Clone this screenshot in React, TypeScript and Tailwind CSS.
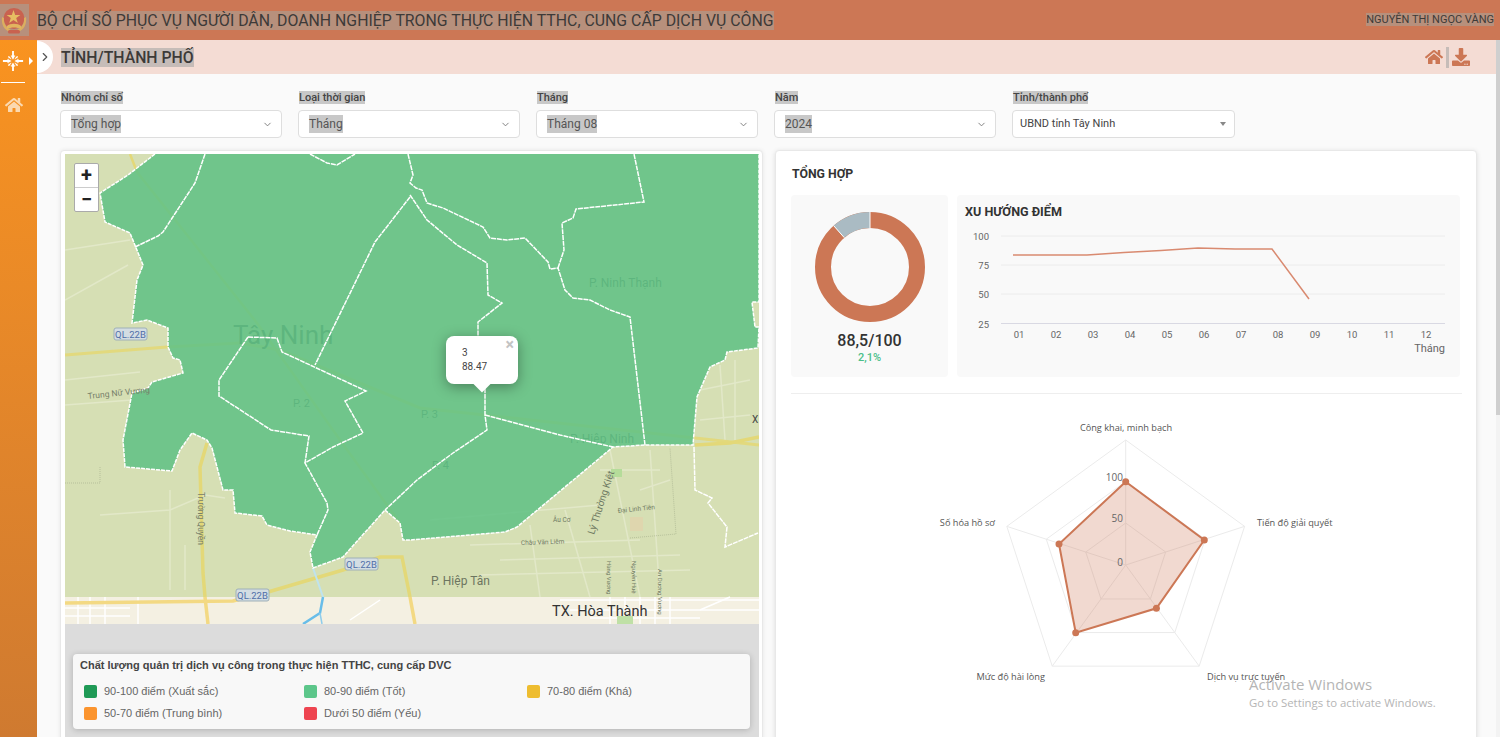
import React from 'react';
import { FaHome, FaDownload } from 'react-icons/fa';
import { ChevronDown, ChevronRight } from 'lucide-react';

const greenArea =
  '155,154 128,175 100,193 105,222 130,233 143,265 137,280 132,323 147,320 168,328 168,347 173,358 180,360 183,373 152,382 148,388 132,393 123,440 125,467 172,471 180,450 192,433 207,440 212,448 223,490 233,490 235,513 262,516 267,525 290,531 317,535 310,552 313,568 343,557 385,510 400,523 403,540 410,540 505,532 517,527 613,447 645,445 693,445 697,397 710,367 725,360 727,352 758,348 759,327 755,327 752,302 759,302 759,154';

const innerLines = [
  '205,154 195,183 163,232 158,236 135,247',
  '410,197 375,242 315,365',
  '248,337 277,338 282,352 366,391 345,401 363,433 333,447 305,463 327,503 328,510 317,535',
  '248,337 219,380 219,396 271,430 309,436 305,463',
  '408,154 413,175 410,183 416,188 422,190 427,203 443,208 483,227 490,238 507,240 525,238 548,262 550,269 558,268 565,290 573,298 590,300 610,310 630,317 645,445',
  '410,195 427,220 457,245 487,263 488,295 502,303 478,322 478,337 485,390 485,415 487,430 453,453 417,480 385,510',
  '485,415 560,435 613,447',
  '558,268 564,250 562,223 573,218 576,209 644,202 634,154',
  '310,154 327,163 337,165 355,154',
  '694,447 695,490 712,498 708,503 727,527 725,547 758,533',
];

const paleStreets = [
  '65,250 130,240',
  '65,300 128,265',
  '65,380 140,372',
  '65,405 132,400',
  '100,515 170,510 205,495 225,498',
  '170,490 170,590',
  '185,545 185,590',
  '430,520 600,505',
  '470,545 640,540',
  '530,525 540,597',
  '565,510 590,597',
  '610,450 640,597',
  '650,450 660,597',
  '640,490 670,480',
  '600,470 660,470',
  '500,560 680,555',
  '480,575 690,570',
  '700,390 750,380',
  '700,420 750,415',
  '720,365 725,440',
  '735,360 735,440',
];

const cityStreets = [
  '65,608 130,608',
  '65,616 130,616',
  '78,597 78,624',
  '90,597 90,624',
  '105,597 105,624',
  '138,597 138,624',
  '560,600 760,600',
  '570,610 760,610',
  '590,618 700,618',
  '610,597 610,624',
  '625,597 625,624',
  '640,597 640,624',
  '655,597 655,624',
  '670,597 670,624',
  '350,620 380,600',
  '700,610 730,597',
];

const RoadBadge: React.FC<{ x: number; y: number }> = ({ x, y }) => (
  <g>
    <rect x={x} y={y} width="33" height="12" rx="2" fill="#d3dde3" stroke="#9fb0b8" />
    <text x={x + 16.5} y={y + 9.5} textAnchor="middle" fontSize="9.5" fill="#4f6ea8">
      QL.22B
    </text>
  </g>
);

const MapDrawing = () => (
  <svg viewBox="65 154 694 470" className="block w-[694px] h-[470px]" style={{ fontFamily: 'Roboto, sans-serif' }}>
    <rect x="65" y="154" width="694" height="470" fill="#d6dfb4" />
    <rect x="65" y="597" width="694" height="27" fill="#f4f0e2" />
    {paleStreets.map((p) => (
      <polyline key={p} points={p} fill="none" stroke="#e2e8c8" strokeWidth="1.5" />
    ))}
    {cityStreets.map((p) => (
      <polyline key={p} points={p} fill="none" stroke="#ffffff" strokeWidth="1.5" />
    ))}
    <rect x="611" y="469" width="11" height="8" fill="#b5dc9a" />
    <rect x="630" y="517" width="13" height="14" fill="#dfd6ae" />
    <rect x="617" y="616" width="16" height="8" fill="#bfe0a6" />
    <polyline points="630,538 676,534 670,448" fill="none" stroke="#a9b38f" strokeWidth="0.7" strokeDasharray="1 1" />
    <polyline points="65,483 100,483 100,467" fill="none" stroke="#a9b38f" strokeWidth="0.7" strokeDasharray="1 1" />

    {/* duong chinh */}
    <g fill="none" stroke="#e3d878" strokeWidth="3.5">
      <polyline points="65,355 167,347 240,343 280,350 420,408 759,445" strokeWidth="3" opacity="0.9" />
      <polyline points="130,154 137,172 257,323 340,440 400,523" strokeWidth="2.5" />
      <polyline points="207,443 200,467 203,573 205,597" />
      <polyline points="268,592 343,570 380,557 402,557 410,597" />
      <polyline points="695,445 730,443 759,437" />
    </g>
    <g fill="none" stroke="#f3d983" strokeWidth="3.5">
      <polyline points="65,603 233,601 268,592" />
      <polyline points="205,597 208,624" />
      <polyline points="410,597 415,624" />
    </g>
    <polyline points="313,568 323,597" fill="none" stroke="#bfe3ee" strokeWidth="2" />
    <polyline points="323,597 320,613 303,624" fill="none" stroke="#68bde9" strokeWidth="2.5" />
    <polyline points="320,613 322,624" fill="none" stroke="#8fcdec" strokeWidth="1.5" />

    <text x="233" y="344" fontSize="26" fill="#3a5a48">Tây Ninh</text>
    <text x="293" y="407" fontSize="11" fill="#3a5a48">P. 2</text>
    <text x="421" y="418" fontSize="11" fill="#3a5a48">P. 3</text>
    <text x="432" y="469" fontSize="11" fill="#3a5a48">P. 4</text>
    <text x="589" y="287" fontSize="12" fill="#3a5a48">P. Ninh Thạnh</text>
    <text x="570" y="443" fontSize="12" fill="#3a5a48">P. Hiệp Ninh</text>

    <polygon points={greenArea} fill="#62c285" opacity="0.88" />
    <polyline points={greenArea} fill="none" stroke="#ffffff" strokeWidth="1.5" strokeDasharray="4 1" />
    {innerLines.map((p) => (
      <polyline key={p} points={p} fill="none" stroke="#ffffff" strokeWidth="1.5" strokeDasharray="5 0.8" />
    ))}

    <RoadBadge x={114} y={328} />
    <RoadBadge x={345} y={558} />
    <RoadBadge x={236} y={589} />
    <text x="88" y="399" fontSize="8.5" fill="#77806a" transform="rotate(-6 88 399)">Trung Nữ Vương</text>
    <text x="198" y="492" fontSize="8.5" fill="#77806a" transform="rotate(90 198 492)">Trường Quyền</text>
    <text x="594" y="535" fontSize="10" fill="#6f7a62" transform="rotate(-72 594 535)">Lý Thường Kiệt</text>
    <text x="618" y="513" fontSize="6.5" fill="#6f7a62" transform="rotate(-6 618 513)">Đại Linh Tiên</text>
    <text x="553" y="522" fontSize="6.5" fill="#6f7a62">Âu Cơ</text>
    <text x="521" y="545" fontSize="6.5" fill="#6f7a62" transform="rotate(-2 521 545)">Châu Văn Liêm</text>
    <text x="607" y="561" fontSize="6" fill="#6f7a62" transform="rotate(90 607 561)">Hùng Vương</text>
    <text x="632" y="561" fontSize="6" fill="#6f7a62" transform="rotate(90 632 561)">Nguyễn Huệ</text>
    <text x="658" y="569" fontSize="6" fill="#6f7a62" transform="rotate(90 658 569)">An Dương Vương</text>
    <text x="431" y="585" fontSize="12" fill="#6d7560">P. Hiệp Tân</text>
    <text x="552" y="616" fontSize="14.5" fill="#333333">TX. Hòa Thành</text>
    <text x="752" y="423" fontSize="10" fill="#444444">X</text>
  </svg>
);

const MapPopup = () => (
  <div className="absolute left-[381px] top-[182px] w-[72px] h-[48px] rounded-lg bg-white shadow-[0_3px_14px_rgba(0,0,0,0.35)] pl-4 pt-[10px] text-[10px] leading-[14px] text-[#444]">
    <div>3</div>
    <div>88.47</div>
    <span className="absolute right-[4px] top-[1px] text-[16px] font-bold leading-[16px] text-[#c3c3c3]">×</span>
    <span className="absolute left-[30px] top-[42px] w-[12px] h-[12px] rotate-45 bg-white" />
  </div>
);

const legendItems = [
  { color: 'bg-[#1f9a56]', label: '90-100 điểm (Xuất sắc)' },
  { color: 'bg-[#5cc68a]', label: '80-90 điểm (Tốt)' },
  { color: 'bg-[#eebd30]', label: '70-80 điểm (Khá)' },
  { color: 'bg-[#fb942e]', label: '50-70 điểm (Trung bình)' },
  { color: 'bg-[#ee4450]', label: 'Dưới 50 điểm (Yếu)' },
];

const Legend = () => (
  <div className="h-[75px] rounded bg-[#f8f8f8] shadow-[0_1px_6px_rgba(0,0,0,0.2)] pl-[7px] pt-[5px]" style={{ fontFamily: '"Liberation Sans", Arial, sans-serif' }}>
    <div className="text-[11px] leading-[13px] font-bold text-[#444]">
      Chất lượng quản trị dịch vụ công trong thực hiện TTHC, cung cấp DVC
    </div>
    <div className="mt-[8px] ml-[4px] grid grid-cols-[220px_223px_200px]">
      {legendItems.map((item) => (
        <div key={item.label} className="flex items-center h-[22px]">
          <span className={`w-[13px] h-[13px] rounded-[2px] ${item.color}`} />
          <span className="ml-[7px] text-[11px] text-[#666]">{item.label}</span>
        </div>
      ))}
    </div>
  </div>
);

const filters = [
  { label: 'Nhóm chỉ số', value: 'Tổng hợp' },
  { label: 'Loại thời gian', value: 'Tháng' },
  { label: 'Tháng', value: 'Tháng 08' },
  { label: 'Năm', value: '2024' },
];

const FilterSelect: React.FC<{ label: string; value: string }> = ({ label, value }) => (
  <div className="w-[222px]">
    <div className="h-[16px] pl-px text-[11px] leading-[16px] font-medium text-[#444]">
      <span className="bg-[#c8c8c8]">{label}</span>
    </div>
    <div className="mt-[4px] h-[28px] flex items-center justify-between pl-[10px] pr-[8px] bg-white border border-[#dedede] rounded text-[12px] text-[#555]">
      <span className="bg-[#c8c8c8]">{value}</span>
      <ChevronDown className="w-[11px] h-[11px] text-[#777]" />
    </div>
  </div>
);

const Donut = () => (
  <svg viewBox="0 0 110 110" className="w-[110px] h-[110px]">
    <circle cx="55" cy="55" r="47" fill="none" stroke="#cc7755" strokeWidth="16" />
    <circle
      cx="55"
      cy="55"
      r="47"
      fill="none"
      stroke="#aabbc3"
      strokeWidth="16"
      strokeDasharray="34 296"
      transform="rotate(-90 55 55) scale(1 -1) translate(0 -110)"
    />
    <line x1="55" y1="0" x2="55" y2="16" stroke="#ffffff" strokeWidth="1" />
    <line x1="18.7" y1="13.7" x2="29.3" y2="25.7" stroke="#ffffff" strokeWidth="1" />
  </svg>
);

const months = ['01', '02', '03', '04', '05', '06', '07', '08', '09', '10', '11', '12'];
const trendPoints = '56,60 93,60 130,60 167,57.5 204,55.5 241,53 278,54 315,54 352,104';

const TrendChart = () => (
  <svg viewBox="0 0 503 150" className="block w-[503px] h-[150px]" style={{ fontFamily: 'Roboto, sans-serif' }}>
    {[
      { y: 41, label: '100' },
      { y: 70, label: '75' },
      { y: 99, label: '50' },
      { y: 128.5, label: '25' },
    ].map((t) => (
      <g key={t.label}>
        <line x1="44" x2="488" y1={t.y} y2={t.y} stroke={t.label === '25' ? '#d9d9e3' : '#ececec'} />
        <text x="32" y={t.y + 4} textAnchor="end" fontSize="9.5" fill="#666">
          {t.label}
        </text>
      </g>
    ))}
    <polyline points={trendPoints} fill="none" stroke="#d98a70" strokeWidth="1.5" />
    {months.map((m, i) => (
      <text key={m} x={62 + i * 37} y="143" textAnchor="middle" fontSize="9.5" fill="#666">
        {m}
      </text>
    ))}
  </svg>
);

const cx = 334.7;
const cy = 165;
const vertex = (r: number, i: number) => {
  const a = ((-90 + i * 72) * Math.PI) / 180;
  return [cx + r * Math.cos(a), cy + r * Math.sin(a)];
};
const ring = (r: number) => [0, 1, 2, 3, 4].map((i) => vertex(r, i).join(',')).join(' ');
const radarData = [
  [334.7, 81.7],
  [413.3, 140],
  [365.4, 208.3],
  [284.7, 232.7],
  [268, 144],
];

const RadarChart = () => (
  <svg viewBox="0 0 686 340" className="block mt-[6px] w-[686px] h-[340px]" style={{ fontFamily: '"Open Sans", sans-serif' }}>
    {[42, 83.5, 125].map((r) => (
      <polygon key={r} points={ring(r)} fill="none" stroke="#ebebeb" />
    ))}
    {[0, 1, 2, 3, 4].map((i) => {
      const [x, y] = vertex(125, i);
      return <line key={i} x1={cx} y1={cy} x2={x} y2={y} stroke="#ebebeb" />;
    })}
    <polygon points={radarData.map((p) => p.join(',')).join(' ')} fill="#cc7755" fillOpacity="0.28" stroke="#cc7755" strokeWidth="2" />
    {radarData.map((p) => (
      <circle key={p[0]} cx={p[0]} cy={p[1]} r="3.5" fill="#cc7755" />
    ))}
    <g fontSize="10" fill="#666" textAnchor="end">
      <text x="332" y="81">100</text>
      <text x="332" y="122">50</text>
      <text x="332" y="166">0</text>
    </g>
    <g fontSize="9.2" fill="#555">
      <text x="335" y="31" textAnchor="middle">Công khai, minh bạch</text>
      <text x="466" y="126">Tiến độ giải quyết</text>
      <text x="204" y="126" textAnchor="end">Số hóa hồ sơ</text>
      <text x="416" y="280">Dịch vụ trực tuyến</text>
      <text x="254" y="280" textAnchor="end">Mức độ hài lòng</text>
    </g>
  </svg>
);

const Emblem = () => (
  <svg viewBox="0 0 29 32" className="w-[29px] h-[32px]">
    <circle cx="14" cy="14.5" r="10.5" fill="#c9624f" />
    <path d="M13.5 6 L15.2 11 L20.4 11 L16.2 14 L17.8 19 L13.5 15.9 L9.2 19 L10.8 14 L6.6 11 L11.8 11 Z" fill="#e6bd62" />
    <path d="M2 13 C1 20 4 26 10 28 L10.5 25.5 C6 24 3.5 19 4 14 Z" fill="#dcae5f" />
    <path d="M26 13 C27 20 24 26 18 28 L17.5 25.5 C22 24 24.5 19 24 14 Z" fill="#dcae5f" />
    <path d="M7 22 C10 19 18 19 21 22 L21 25 C17 23 11 23 7 25 Z" fill="#e2b45f" />
    <rect x="8" y="26" width="12" height="3.5" rx="1.5" fill="#c9624f" />
  </svg>
);

const NavArrows = () => (
  <svg viewBox="0 0 24 24" className="w-[22px] h-[22px]" fill="#ffffff">
    <path d="M11 1 H13 V6 H14.5 L12 10.5 L9.5 6 H11 Z" />
    <path d="M11 23 H13 V18 H14.5 L12 13.5 L9.5 18 H11 Z" />
    <path d="M1 11 V13 H6 V14.5 L10.5 12 L6 9.5 V11 Z" />
    <path d="M23 11 V13 H18 V14.5 L13.5 12 L18 9.5 V11 Z" />
    <path d="M6.5 6.5 L9.5 7.5 L8.8 8.2 L10.4 9.8 L9.8 10.4 L8.2 8.8 L7.5 9.5 Z" />
    <path d="M17.5 6.5 L14.5 7.5 L15.2 8.2 L13.6 9.8 L14.2 10.4 L15.8 8.8 L16.5 9.5 Z" />
    <path d="M6.5 17.5 L9.5 16.5 L8.8 15.8 L10.4 14.2 L9.8 13.6 L8.2 15.2 L7.5 14.5 Z" />
    <path d="M17.5 17.5 L14.5 16.5 L15.2 15.8 L13.6 14.2 L14.2 13.6 L15.8 15.2 L16.5 14.5 Z" />
  </svg>
);

const App: React.FC = () => {
  return (
    <div className="relative w-[1500px] h-[737px] overflow-hidden flex flex-col bg-[#fafafa]" style={{ fontFamily: 'Roboto, sans-serif' }}>
      <header className="h-[40px] shrink-0 flex items-center justify-between bg-[#cc7755] pr-[6px]">
        <div className="flex items-center">
          <div className="bg-[#b7907c] h-[32px] w-[29px] flex items-center justify-center">
            <Emblem />
          </div>
          <h1 className="ml-[8px] text-[15.85px] leading-[21px] text-[#3d3a38]">
            <span className="bg-[#b7907c]">BỘ CHỈ SỐ PHỤC VỤ NGƯỜI DÂN, DOANH NGHIỆP TRONG THỰC HIỆN TTHC, CUNG CẤP DỊCH VỤ CÔNG</span>
          </h1>
        </div>
        <div className="text-[11px] leading-[14px] text-[#3d3a38]">
          <span className="bg-[#b7907c]">NGUYỄN THỊ NGỌC VÀNG</span>
        </div>
      </header>

      <div className="flex flex-1 min-h-0">
        <aside className="w-[37px] shrink-0 flex flex-col items-center bg-gradient-to-b from-[#f9931f] to-[#cf7a30]">
          <div className="relative h-[42px] w-full flex items-center pl-[2px]">
            <NavArrows />
            <span className="absolute left-[29px] top-[17px] w-0 h-0 border-y-[4px] border-y-transparent border-l-[4px] border-l-white" />
          </div>
          <div className="w-[24px] h-px bg-white self-start ml-px" />
          <div className="mt-[13px] w-full pl-[5px]">
            <FaHome className="w-[18px] h-[18px] text-[#fbd9b0]" />
          </div>
        </aside>

        <main className="flex-1 min-w-0 flex flex-col">
          <div className="relative h-[34px] shrink-0 flex items-center justify-between bg-[#f4dcd4] pl-[24px] pr-[26px]">
            <span className="absolute left-0 top-px w-[16px] h-[32px] rounded-r-full bg-white flex items-center">
              <ChevronRight className="w-[14px] h-[14px] text-[#555] ml-px" />
            </span>
            <h2 className="text-[15.8px] leading-[21px] font-medium text-[#3d3a38]">
              <span className="bg-[#c6bcb8]">TỈNH/THÀNH PHỐ</span>
            </h2>
            <div className="flex items-center text-[#cc7755]">
              <FaHome className="w-[18px] h-[18px]" />
              <span className="w-[3px] h-[21px] bg-[#c6bcb8] mx-[3px]" />
              <FaDownload className="w-[18px] h-[18px]" />
            </div>
          </div>

          <section className="flex gap-4 pl-[23px] pt-[16px] h-[76px] shrink-0">
            {filters.map((f) => (
              <FilterSelect key={f.label} label={f.label} value={f.value} />
            ))}
            <div className="w-[223px]">
              <div className="h-[16px] pl-px text-[11px] leading-[16px] font-medium text-[#444]">
                <span className="bg-[#c8c8c8]">Tỉnh/thành phố</span>
              </div>
              <div className="mt-[4px] h-[28px] flex items-center justify-between pl-[7px] pr-[8px] bg-white border border-[#dedede] rounded text-[11px] text-[#444]">
                <span>UBND tỉnh Tây Ninh</span>
                <span className="w-0 h-0 border-x-[3.5px] border-x-transparent border-t-[4px] border-t-[#888]" />
              </div>
            </div>
          </section>

          <section className="flex gap-3 pl-[23px] flex-1 min-h-0">
            <div className="w-[703px] h-[600px] shrink-0 bg-white border border-[#e8e8e8] rounded pt-[3px] pl-[4px] pr-[3px] shadow-[0_0_4px_rgba(0,0,0,0.08)]">
              <div className="relative w-[694px]">
                <MapDrawing />
                <div className="absolute left-[9px] top-[9px] w-[25px] h-[49px] bg-white rounded-[2px] border border-[#aaa] flex flex-col text-[#222]">
                  <span className="h-[24px] flex items-center justify-center text-[20px] font-bold leading-none border-b border-[#ccc]">+</span>
                  <span className="h-[24px] flex items-center justify-center text-[20px] font-bold leading-none">−</span>
                </div>
                <MapPopup />
                <div className="bg-[#dcdcdc] h-[140px] pt-[30px] pl-[8px] pr-[9px]">
                  <Legend />
                </div>
              </div>
            </div>

            <div className="w-[702px] h-[600px] shrink-0 bg-white border border-[#e8e8e8] rounded pt-[15px] pl-[15px] pr-[15px] shadow-[0_1px_5px_rgba(0,0,0,0.12)]">
              <h3 className="pl-px text-[12.3px] leading-[16px] font-bold text-[#333]">TỔNG HỢP</h3>
              <div className="mt-[13px] flex gap-[9px]">
                <div className="w-[157px] h-[182px] shrink-0 rounded bg-[#f9f9f9] flex flex-col items-center pt-[17px]">
                  <Donut />
                  <div className="mt-[9px] text-[16px] leading-[20px] font-medium text-[#333]">88,5/100</div>
                  <div className="text-[11px] leading-[14px] font-medium text-[#4cbf8a]">2,1%</div>
                </div>
                <div className="relative w-[503px] h-[182px] rounded bg-[#f9f9f9] pt-[9px]">
                  <h4 className="pl-[8px] text-[12.6px] leading-[16px] font-bold text-[#333]">XU HƯỚNG ĐIỂM</h4>
                  <div className="absolute left-0 top-[0px]">
                    <TrendChart />
                  </div>
                  <span className="absolute right-[15px] top-[147px] text-[11px] leading-[14px] text-[#666]">Tháng</span>
                </div>
              </div>
              <div className="mt-[16px] h-px w-[671px] bg-[#eeeeee]" />
              <RadarChart />
            </div>
          </section>
        </main>

        <div className="w-[4px] shrink-0 bg-[#f3f3f3]">
          <div className="h-[375px] bg-[#cfcfcf]" />
        </div>
      </div>

      <div className="absolute left-[1249px] top-[675px] text-[#b5b5b5]" style={{ fontFamily: '"Open Sans", sans-serif' }}>
        <div className="text-[15px] leading-[18px]">Activate Windows</div>
        <div className="mt-[2px] text-[11.4px] leading-[15px]">Go to Settings to activate Windows.</div>
      </div>
    </div>
  );
};

export default App;
